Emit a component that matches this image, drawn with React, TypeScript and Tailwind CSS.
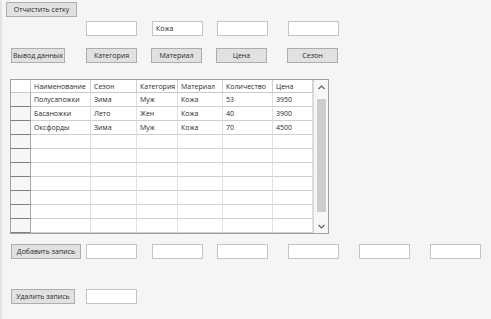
import React from "react";

const font = { fontFamily: '"Open Sans", "Noto Sans", sans-serif' };

function Btn({ label, w, ml }: { label: string; w: number; ml?: number }) {
  return (
    <div
      className="h-[15px] flex items-center justify-center bg-[#e1e1e1] border border-[#adadad] text-[7px] text-[#2a2a2a] leading-none shrink-0 whitespace-nowrap"
      style={{ width: w, marginLeft: ml ?? 0 }}
    >
      {label}
    </div>
  );
}

function Inp({ ml, value }: { ml: number; value?: string }) {
  return (
    <div
      className="w-[51px] h-[15px] bg-white border border-[#c4c4c4] text-[7px] text-[#2a2a2a] leading-none flex items-center pl-[3px] shrink-0"
      style={{ marginLeft: ml }}
    >
      {value ?? ""}
    </div>
  );
}

const cols = [
  { name: "Наименование", w: 60 },
  { name: "Сезон", w: 46 },
  { name: "Категория", w: 41 },
  { name: "Материал", w: 45 },
  { name: "Количество", w: 50 },
  { name: "Цена", w: 40 },
];

const data = [
  ["Полусапожки", "Зима", "Муж", "Кожа", "53", "3950"],
  ["Басаножки", "Лето", "Жен", "Кожа", "40", "3900"],
  ["Оксфорды", "Зима", "Муж", "Кожа", "70", "4500"],
];

function Grid() {
  const rows = Array.from({ length: 10 }, (_, i) => data[i] ?? ["", "", "", "", "", ""]);
  return (
    <div className="ml-[8px] mt-[16px] w-[319px] h-[155px] border border-[#a0a0a0] bg-white flex">
      <div className="flex flex-col">
        <div className="flex h-[13px] border-b border-[#c8c8c8]">
          <div className="w-[20px] border-r border-[#c8c8c8] bg-white" />
          {cols.map((c) => (
            <div
              key={c.name}
              className="border-r border-[#d0d0d0] text-[7px] text-[#2a2a2a] leading-none flex items-center pl-[3px] whitespace-nowrap overflow-hidden"
              style={{ width: c.w }}
            >
              {c.name}
            </div>
          ))}
        </div>
        {rows.map((r, i) => (
          <div key={i} className="flex h-[14px]">
            <div className="w-[20px] border-r border-[#a8a8a8] border-b border-b-[#808080] bg-[#f6f6f6]" />
            {r.map((v, j) => (
              <div
                key={j}
                className="border-r border-[#e0e0e0] border-b border-b-[#cfcfcf] text-[7px] text-[#2a2a2a] leading-none flex items-center pl-[3px] whitespace-nowrap overflow-hidden"
                style={{ width: cols[j].w }}
              >
                {v}
              </div>
            ))}
          </div>
        ))}
      </div>
      <div className="flex-1 flex flex-col items-center bg-[#f7f7f7] border-l border-[#d8d8d8]">
        <div className="h-[14px] flex items-center justify-center">
          <svg width="7" height="5" viewBox="0 0 7 5"><path d="M0.5 4 L3.5 1 L6.5 4" fill="none" stroke="#606060" strokeWidth="1.2" /></svg>
        </div>
        <div className="mt-[5px] w-[9px] h-[113px] bg-[#cdcdcd]" />
        <div className="flex-1" />
        <div className="h-[14px] flex items-center justify-center">
          <svg width="7" height="5" viewBox="0 0 7 5"><path d="M0.5 1 L3.5 4 L6.5 1" fill="none" stroke="#606060" strokeWidth="1.2" /></svg>
        </div>
      </div>
    </div>
  );
}

export default function App() {
  return (
    <div className="w-[491px] h-[319px] bg-[#f5f5f5] border-l-2 border-[#e4e4e4] overflow-hidden relative" style={font}>
      <div className="pt-[2px] pl-[4px] flex">
        <Btn label="Отчистить сетку" w={71} />
      </div>
      <div className="flex mt-[4px]">
        <Inp ml={84} />
        <Inp ml={15} value="Кожа" />
        <Inp ml={14} />
        <Inp ml={20} />
      </div>
      <div className="flex mt-[12px]">
        <Btn label="Вывод данных" w={54} ml={9} />
        <Btn label="Категория" w={51} ml={21} />
        <Btn label="Материал" w={51} ml={14} />
        <Btn label="Цена" w={51} ml={14} />
        <Btn label="Сезон" w={51} ml={20} />
      </div>
      <Grid />
      <div className="flex mt-[10px]">
        <Btn label="Добавить запись" w={70} ml={9} />
        <Inp ml={5} />
        <Inp ml={15} />
        <Inp ml={14} />
        <Inp ml={20} />
        <Inp ml={20} />
        <Inp ml={20} />
      </div>
      <div className="flex mt-[30px]">
        <Btn label="Удалить запись" w={64} ml={9} />
        <Inp ml={11} />
      </div>
    </div>
  );
}
